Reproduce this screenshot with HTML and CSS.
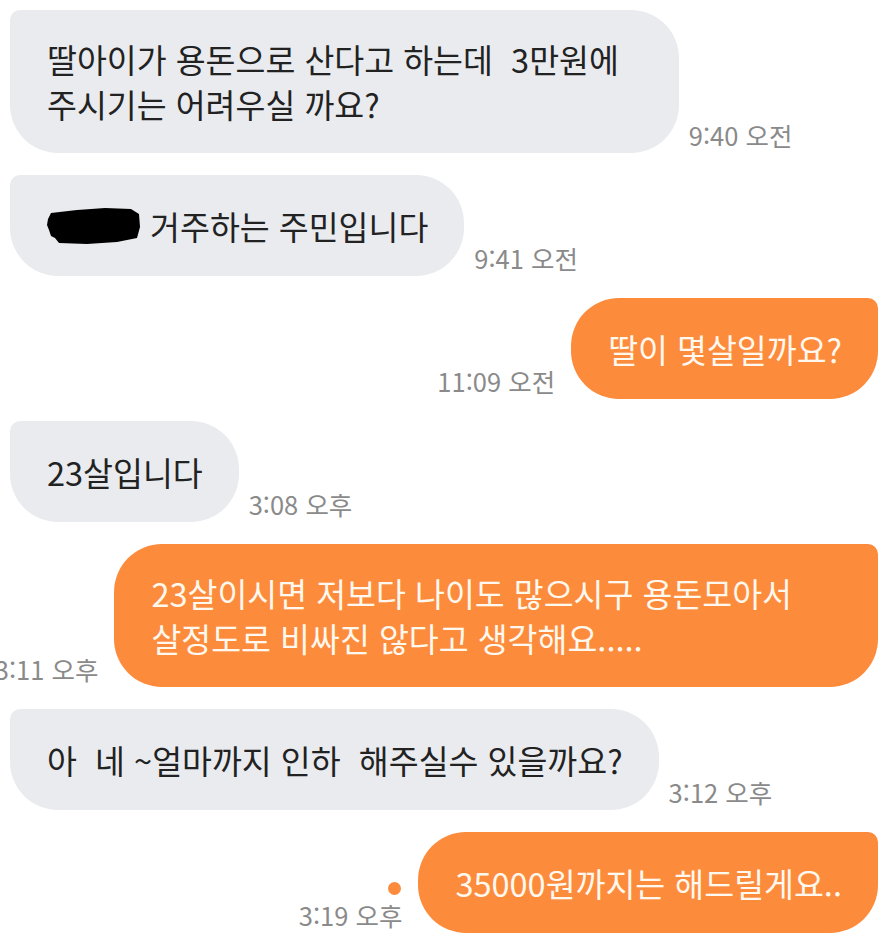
FILE: index.html
```html
<!DOCTYPE html>
<html lang="ko">
<head>
    <meta charset="UTF-8">
    <meta name="viewport" content="width=device-width, initial-scale=1.0">
    <title>채팅</title>
    <link rel="stylesheet" href="styles.css">
</head>
<body>
    <section class="chat">
        <div class="row in">
            <div class="bubble two-line pad-first">딸아이가 용돈으로 산다고 하는데 &nbsp;3만원에<br>주시기는 어려우실 까요?</div>
            <div class="meta"><span class="time">9:40 오전</span></div>
        </div>

        <div class="row in">
            <div class="bubble"><svg class="redact" width="94" height="38" viewBox="0 0 94 38"><path d="M4 6 L30 3 L58 1 L84 2 L92 7 L93 20 L90 31 L70 35 L40 37 L12 36 L8 31 L4 29 L2 23 L0 18 L1 12 Z" fill="#000"/></svg> 거주하는 주민입니다</div>
            <div class="meta"><span class="time">9:41 오전</span></div>
        </div>

        <div class="row out">
            <div class="meta"><span class="time">11:09 오전</span></div>
            <div class="bubble">딸이 몇살일까요?</div>
        </div>

        <div class="row in">
            <div class="bubble">23살입니다</div>
            <div class="meta"><span class="time">3:08 오후</span></div>
        </div>

        <div class="row out">
            <div class="meta"><span class="time">3:11 오후</span></div>
            <div class="bubble two-line pad-long">23살이시면 저보다 나이도 많으시구 용돈모아서<br>살정도로 비싸진 않다고 생각해요.....</div>
        </div>

        <div class="row in">
            <div class="bubble">아 &nbsp;네 ~얼마까지 인하 &nbsp;해주실수 있을까요?</div>
            <div class="meta"><span class="time">3:12 오후</span></div>
        </div>

        <div class="row out">
            <div class="meta"><span class="dot"></span><span class="time">3:19 오후</span></div>
            <div class="bubble">35000원까지는 해드릴게요..</div>
        </div>
    </section>
</body>
</html>
```

FILE: styles.css
```css
body {
    margin: 0;
    padding: 0;
    background: #ffffff;
    font-family: "Noto Sans CJK KR", "Noto Sans", sans-serif;
}
.chat {
    display: flex;
    flex-direction: column;
    gap: 22px;
    padding: 10px 14px 0 10px;
}
.row {
    display: flex;
    align-items: flex-end;
    gap: 10px;
}
.row.out {
    justify-content: flex-end;
    gap: 16px;
}
.bubble {
    flex-shrink: 0;
    padding: 28px 36px 28px 37px;
    font-size: 32.5px;
    line-height: 45px;
    white-space: nowrap;
    border-radius: 48px;
}
.bubble.two-line {
    padding-top: 26px;
    padding-bottom: 27px;
}
.in .bubble {
    background-color: #e9ebee;
    color: #222222;
    border-top-left-radius: 10px;
}
.out .bubble {
    background-color: #fd8b3c;
    color: #fff8ee;
    border-top-right-radius: 10px;
}
.bubble.pad-first {
    padding-right: 60px;
}
.bubble.pad-long {
    padding-right: 86px;
}
.redact {
    vertical-align: -5px;
}
.meta {
    flex-shrink: 0;
    display: flex;
    flex-direction: column;
    align-items: flex-end;
    margin-bottom: 3px;
    font-size: 25.5px;
    line-height: 30px;
    color: #8a8a8a;
}
.dot {
    width: 13px;
    height: 13px;
    border-radius: 50%;
    background-color: #fd8b3c;
    margin: 0 1px 5px 0;
}
```
